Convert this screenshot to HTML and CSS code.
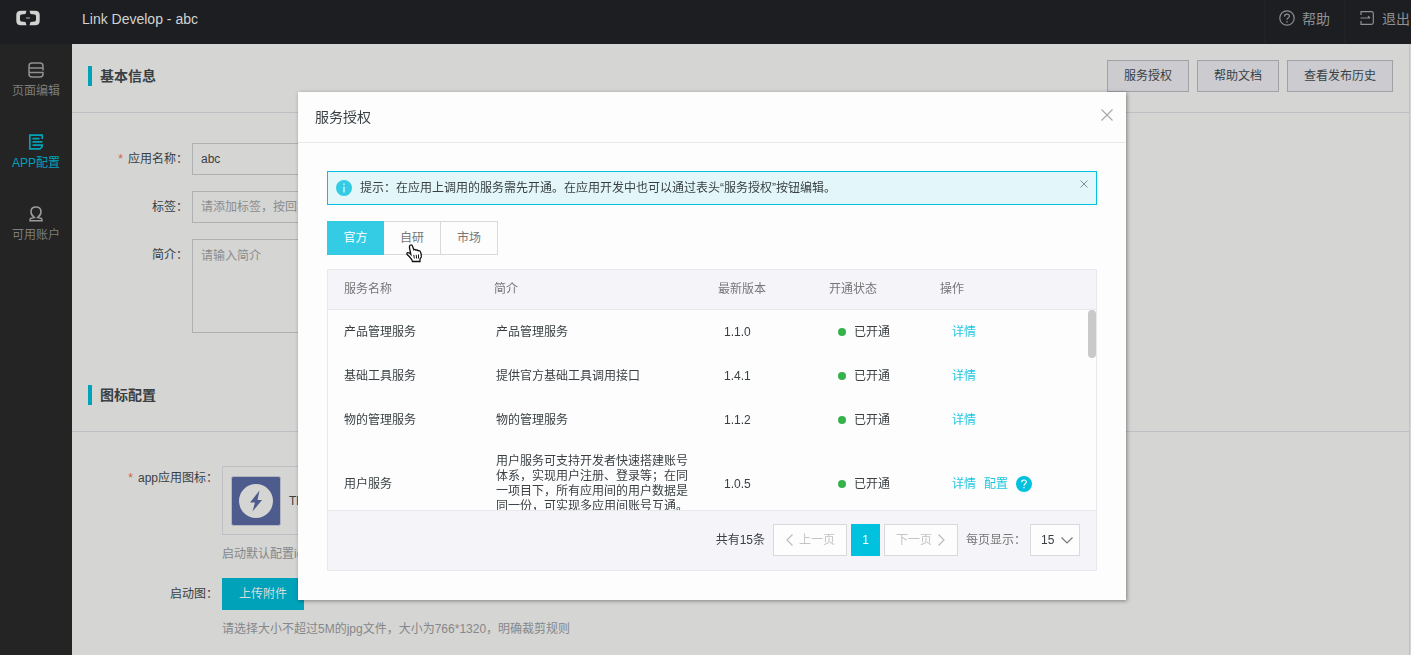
FILE: index.html
```html
<!DOCTYPE html>
<html lang="zh-CN">
<head>
    <meta charset="UTF-8">
    <meta name="viewport" content="width=device-width, initial-scale=1.0">
    <title>Link Develop - abc</title>
    <link rel="stylesheet" href="styles.css">
</head>
<body>

    <!-- Top bar -->
    <header class="topbar">
        <a href="#" class="logo" aria-label="Link Develop">
            <svg width="24" height="16" viewBox="0 0 24 16">
                <path d="M10.500 0.800H5Q0.300 0.800 0.300 5V11Q0.300 15.200 5 15.200H10.500L9.500 12L5.500 11.600Q4 11.400 4 10V6Q4 4.600 5.500 4.400L9.500 4Z" fill="#d2d3d1"/>
                <path d="M13.500 0.800H19Q23.700 0.800 23.700 5V11Q23.700 15.200 19 15.200H13.500L14.500 12L18.500 11.600Q20 11.400 20 10V6Q20 4.600 18.500 4.400L14.500 4Z" fill="#d2d3d1"/>
                <path d="M10 8H14" stroke="#b4b5b4"/>
            </svg>
        </a>
        <span class="app-name">Link Develop - abc</span>
        <nav class="top-links">
            <a href="#">
                <svg width="16" height="16" viewBox="0 0 16 16" fill="none" stroke="#8f9090" stroke-width="1.200">
                    <circle cx="8" cy="8" r="7.200"/>
                    <path d="M5.600 6.400Q5.600 4.200 8 4.200Q10.400 4.200 10.400 6.100Q10.400 7.200 9.200 7.900Q8 8.600 8 9.800M8 11V12.400"/>
                </svg>
                帮助
            </a>
            <a href="#">
                <svg width="14" height="16" viewBox="0 0 14 16" fill="none" stroke="#8f9090" stroke-width="1.200">
                    <path d="M1 5V1.700H11.500Q13.300 1.700 13.300 3.500V12.500Q13.300 14.300 11.500 14.300H1V11M0.500 8H10M8 6.200L10 8"/>
                </svg>
                退出
            </a>
        </nav>
    </header>

    <div class="layout">
        <!-- Side menu -->
        <nav class="sidebar">
            <a href="#">
                <svg width="16" height="16" viewBox="0 0 16 16" fill="none" stroke="#8f908f" stroke-width="1.500">
                    <path d="M15 5.500V4Q15 1 12 1H4Q1 1 1 4V12Q1 15 4 15H12Q15 15 15 12V10.500H1M1 6H15.500M15 5V8.500"/>
                </svg>
                页面编辑
            </a>
            <a href="#" class="active">
                <svg width="16" height="16" viewBox="0 0 16 16" fill="none" stroke="#00a2ba" stroke-width="1.700">
                    <path d="M14.200 5V1.200H1.800V14.800H12L14.200 12.500V11.200H4.500M4.500 4.700H11.500M4.500 7.900H14.500"/>
                </svg>
                APP配置
            </a>
            <a href="#">
                <svg width="16" height="16" viewBox="0 0 16 16" fill="none" stroke="#9a9b9a" stroke-width="1.600">
                    <path d="M6.200 11.500Q3 9 3 5.800Q3 1 8 1Q13 1 13 5.800Q13 9 9.800 11.500L13 12.300Q14.200 12.800 14 14.800H2Q1.800 12.800 3 12.300Z"/>
                </svg>
                可用账户
            </a>
        </nav>

        <!-- Main content -->
        <main class="content">
            <section>
                <div class="section-head">
                    <h2>基本信息</h2>
                    <div class="head-buttons">
                        <button type="button">服务授权</button>
                        <button type="button">帮助文档</button>
                        <button type="button">查看发布历史</button>
                    </div>
                </div>
                <form class="form">
                    <div class="form-row">
                        <label for="appName"><span class="required">*</span>应用名称：</label>
                        <input type="text" id="appName" value="abc">
                    </div>
                    <div class="form-row">
                        <label for="tags">标签：</label>
                        <input type="text" id="tags" placeholder="请添加标签，按回车确认">
                    </div>
                    <div class="form-row">
                        <label for="intro">简介：</label>
                        <textarea id="intro" placeholder="请输入简介"></textarea>
                    </div>
                </form>
            </section>

            <section>
                <div class="section-head">
                    <h2>图标配置</h2>
                </div>
                <div class="form form-wide">
                    <div class="form-row">
                        <span class="label"><span class="required">*</span>app应用图标：</span>
                        <div>
                            <div class="icon-box">
                                <svg width="50" height="50" viewBox="0 0 50 50">
                                    <rect x="0.500" y="0.500" width="49" height="49" rx="2" fill="#4e5c8d" stroke="#b5b7c0"/>
                                    <circle cx="25" cy="25" r="17" fill="#d5d5d3"/>
                                    <path d="M28.500 14.500L19 26.500H24L21.500 35.500L31 24H26.500Z" fill="#4e5c8d"/>
                                </svg>
                                <span>This icon</span>
                            </div>
                            <p class="hint">启动默认配置icon</p>
                        </div>
                    </div>
                    <div class="form-row">
                        <span class="label">启动图：</span>
                        <div>
                            <button type="button" class="upload-btn">上传附件</button>
                            <p class="hint">请选择大小不超过5M的jpg文件，大小为766*1320，明确裁剪规则</p>
                        </div>
                    </div>
                </div>
            </section>
        </main>
    </div>

    <!-- Service dialog -->
    <div class="overlay">
        <div class="modal" role="dialog" aria-labelledby="modalTitle">
            <div class="modal-head">
                <h3 id="modalTitle">服务授权</h3>
                <button type="button" class="close" aria-label="关闭">
                    <svg width="12" height="12" viewBox="0 0 12 12" stroke="#aaaaaa" stroke-width="1.200"><path d="M0.500 0.500L11.500 11.500M11.500 0.500L0.500 11.500"/></svg>
                </button>
            </div>
            <div class="modal-body">
                <div class="tip">
                    <svg width="16" height="16" viewBox="0 0 16 16">
                        <circle cx="8" cy="8" r="8" fill="#33cce4"/>
                        <path d="M8 3.500V5M8 6.500V12.500" stroke="#e3f7fb" stroke-width="1.300"/>
                    </svg>
                    <p>提示：在应用上调用的服务需先开通。在应用开发中也可以通过表头“服务授权”按钮编辑。</p>
                    <button type="button" class="close" aria-label="关闭提示">
                        <svg width="8" height="8" viewBox="0 0 8 8" stroke="#7d9094"><path d="M0.500 0.500L7.500 7.500M7.500 0.500L0.500 7.500"/></svg>
                    </button>
                </div>

                <div class="tabs">
                    <button type="button" class="active">官方</button>
                    <button type="button">自研
                        <svg class="pointer" width="17" height="19" viewBox="0 0 17 19">
                            <path d="M3.500 2Q4 0.800 5 0.800Q6.200 0.800 6.600 2.200L7.800 5.800Q9 5 10 6.200Q11.400 5.600 12.200 6.800Q13.800 6.300 14.400 7.800Q15.800 10.500 15.300 13L14 15V17.500H6.500Q5.800 15.200 3.500 12.800L1 10.300Q0.500 8.900 1.800 8.600Q3.200 8.500 4.800 10.300L3.500 4Z" fill="#ffffff" stroke="#111111" stroke-width="1.300"/>
                            <path d="M7.800 10.800L8.300 14.500M10.200 10.800L10.600 14.500M12.500 10.500V14.500" stroke="#111111"/>
                        </svg>
                    </button>
                    <button type="button">市场</button>
                </div>

                <div class="service-list">
                    <table class="list-head">
                        <thead>
                            <tr>
                                <th class="col-name">服务名称</th>
                                <th class="col-intro">简介</th>
                                <th class="col-version">最新版本</th>
                                <th class="col-status">开通状态</th>
                                <th>操作</th>
                            </tr>
                        </thead>
                    </table>
                    <div class="list-scroll">
                        <table class="list-body">
                            <tbody>
                                <tr>
                                    <td class="col-name">产品管理服务</td>
                                    <td class="col-intro">产品管理服务</td>
                                    <td class="col-version">1.1.0</td>
                                    <td class="col-status"><span class="status">已开通</span></td>
                                    <td><div class="actions"><a href="#">详情</a></div></td>
                                </tr>
                                <tr>
                                    <td>基础工具服务</td>
                                    <td>提供官方基础工具调用接口</td>
                                    <td>1.4.1</td>
                                    <td><span class="status">已开通</span></td>
                                    <td><div class="actions"><a href="#">详情</a></div></td>
                                </tr>
                                <tr>
                                    <td>物的管理服务</td>
                                    <td>物的管理服务</td>
                                    <td>1.1.2</td>
                                    <td><span class="status">已开通</span></td>
                                    <td><div class="actions"><a href="#">详情</a></div></td>
                                </tr>
                                <tr>
                                    <td>用户服务</td>
                                    <td>用户服务可支持开发者快速搭建账号体系，实现用户注册、登录等；在同一项目下，所有应用间的用户数据是同一份，可实现多应用间账号互通。</td>
                                    <td>1.0.5</td>
                                    <td><span class="status">已开通</span></td>
                                    <td>
                                        <div class="actions">
                                            <a href="#">详情</a>
                                            <a href="#">配置</a>
                                            <svg width="16" height="16" viewBox="0 0 16 16">
                                                <circle cx="8" cy="8" r="8" fill="#00c1de"/>
                                                <path d="M5.700 6.200Q5.700 4 8 4Q10.300 4 10.300 6Q10.300 7 9.200 7.800Q8 8.600 8 9.800M8 11V12.300" fill="none" stroke="#ffffff" stroke-width="1.200"/>
                                            </svg>
                                        </div>
                                    </td>
                                </tr>
                            </tbody>
                        </table>
                        <div class="scroll-thumb"></div>
                    </div>
                    <div class="pager">
                        <span class="total">共有15条</span>
                        <button type="button" class="step" disabled>
                            <svg width="8" height="12" viewBox="0 0 8 12" fill="none" stroke="#bbbbbb" stroke-width="1.200"><path d="M7.500 0.500L2 6L7.500 11.500"/></svg>
                            上一页
                        </button>
                        <button type="button" class="current">1</button>
                        <button type="button" class="step" disabled>
                            下一页
                            <svg width="8" height="12" viewBox="0 0 8 12" fill="none" stroke="#bbbbbb" stroke-width="1.200"><path d="M0.500 0.500L6 6L0.500 11.500"/></svg>
                        </button>
                        <label for="pageSize">每页显示：</label>
                        <div class="page-size">
                            <select id="pageSize">
                                <option>15</option>
                                <option>30</option>
                                <option>50</option>
                            </select>
                            <svg width="12" height="7" viewBox="0 0 12 7" fill="none" stroke="#777777" stroke-width="1.200"><path d="M0.500 0.500L6 6L11.500 0.500"/></svg>
                        </div>
                    </div>
                </div>
            </div>
        </div>
    </div>

</body>
</html>
```
FILE: styles.css
```css
* {
    box-sizing: border-box;
}

body {
    margin: 0;
    height: 100vh;
    display: flex;
    flex-direction: column;
    overflow: hidden;
    font-family: "Liberation Sans", "Noto Sans CJK SC", sans-serif;
    font-size: 12px;
    line-height: 18px;
    color: #393f43;
    background: #d5d5d3;
}

h2, h3, p {
    margin: 0;
}

a {
    text-decoration: none;
}

svg {
    display: block;
    flex: none;
}

button, input, textarea, select {
    font: inherit;
    color: inherit;
    border-radius: 0;
}

button {
    padding: 0;
    cursor: pointer;
}

/* Top bar */
.topbar {
    display: flex;
    flex: none;
    height: 44px;
    background: #1d1e22;
    color: #d2d3d1;
    font-size: 14px;
    line-height: 38px;
    white-space: nowrap;
}

.logo {
    width: 82px;
    padding: 10px 16px;
}

.app-name {
    flex: 1;
}

.top-links {
    display: flex;
}

.top-links a {
    display: flex;
    gap: 7px;
    width: 80px;
    padding-left: 14px;
    border-left: 1px solid #222327;
    color: #8f9090;
}

.top-links a:last-child {
    width: 67px;
    padding-left: 15px;
    gap: 8px;
}

.top-links svg {
    margin-top: 10px;
}

.layout {
    display: flex;
    flex: 1;
    min-height: 0;
}

/* Side menu */
.sidebar {
    flex: none;
    width: 72px;
    background: #232423;
}

.sidebar a {
    display: flex;
    flex-direction: column;
    align-items: center;
    gap: 4px;
    height: 72px;
    padding-top: 18px;
    color: #7c7d7c;
}

.sidebar a.active {
    color: #00a2ba;
}

/* Content */
.content {
    flex: 1;
    min-width: 0;
    margin-right: 1px;
    border-right: 1px solid #c2c2c4;
}

.section-head {
    display: flex;
    align-items: center;
    justify-content: space-between;
    height: 69px;
    padding: 0 16px 4px;
    border-bottom: 1px solid #bfbfc5;
}

.section-head h2 {
    padding-left: 8px;
    border-left: 4px solid #00a2ba;
    font-size: 14px;
    line-height: 20px;
    font-weight: bold;
}

.head-buttons {
    display: flex;
    gap: 8px;
}

.head-buttons button {
    height: 32px;
    padding: 0 16px;
    background: #cbcbd0;
    border: 1px solid #9fa1a4;
}

.form {
    display: flex;
    flex-direction: column;
    gap: 16px;
    padding: 30px 16px 30px 0;
}

.form-row {
    display: flex;
}

.form-row label,
.form-row .label {
    flex: none;
    width: 120px;
    padding-right: 4px;
    line-height: 32px;
    text-align: right;
}

.required {
    margin-right: 5px;
    color: #d4614a;
}

.form input,
.form textarea {
    display: block;
    width: 400px;
    height: 32px;
    padding: 0 8px;
    background: transparent;
    border: 1px solid #afb0b1;
}

.form textarea {
    height: 94px;
    padding: 7px 8px;
    resize: none;
}

.form ::placeholder {
    color: #8b8c8e;
    opacity: 1;
}

.form-wide {
    gap: 15px;
    padding-top: 34px;
}

.form-wide .form-row .label {
    width: 150px;
    line-height: 24px;
}

.form-wide .form-row:last-child .label {
    line-height: 32px;
}

.icon-box {
    display: flex;
    align-items: center;
    gap: 8px;
    width: 240px;
    height: 69px;
    padding: 0 8px;
    border: 1px solid #bfbfc5;
}

.hint {
    margin-top: 10px;
    color: #85878a;
}

.upload-btn {
    display: block;
    width: 82px;
    height: 32px;
    background: #00a2ba;
    border: 0;
    color: #d9dcdc;
}

/* Dialog */
.overlay {
    position: fixed;
    top: 0;
    right: 0;
    bottom: 0;
    left: 0;
    display: flex;
    justify-content: center;
    align-items: flex-start;
    padding: 92px 0 0 13px;
}

.modal {
    width: 828px;
    background: #fdfdfd;
    box-shadow: 1px 1px 4px rgba(0, 0, 0, 0.4);
}

.modal-head {
    display: flex;
    justify-content: space-between;
    align-items: center;
    height: 51px;
    padding: 0 13px 0 17px;
    border-bottom: 1px solid #e9e9e9;
}

.modal-head h3 {
    font-size: 14px;
    font-weight: normal;
}

.close {
    background: none;
    border: 0;
}

.modal-head .close {
    margin-bottom: 4px;
}

.modal-body {
    padding: 28px 29px 29px;
}

.tip {
    display: flex;
    align-items: center;
    height: 34px;
    padding: 0 8px;
    background: #e3f7fb;
    border: 1px solid #00c1de;
}

.tip p {
    flex: 1;
    margin-left: 8px;
}

.tip .close {
    margin-bottom: 8px;
}

.tabs {
    display: flex;
    margin: 16px 0 14px;
}

.tabs button {
    position: relative;
    width: 57px;
    height: 34px;
    background: #fdfdfd;
    border: 1px solid #d9d9d9;
    border-left: 0;
    color: #777777;
}

.tabs .active {
    background: #33cce4;
    border: 1px solid #33cce4;
    color: #ffffff;
}

.pointer {
    position: absolute;
    top: 22px;
    left: 22px;
}

.service-list {
    border: 1px solid #e9e9ed;
    background: #f4f4f9;
}

.service-list table {
    width: 100%;
    table-layout: fixed;
    border-collapse: collapse;
    text-align: left;
}

.list-head th {
    height: 39px;
    padding: 0 0 2px 16px;
    color: #777777;
    font-weight: normal;
}

.list-head .col-name {
    width: 150px;
}

.list-head .col-intro {
    width: 224px;
}

.list-head .col-version,
.list-head .col-status {
    width: 111px;
}

.list-scroll {
    position: relative;
    height: 202px;
    overflow: hidden;
    background: #fdfdfd;
    border-top: 1px solid #e9e9ed;
    border-bottom: 1px solid #e9e9ed;
}

.list-body td {
    height: 44px;
    padding: 12px 16px;
    line-height: 15px;
}

.list-body .col-name {
    width: 152px;
}

.list-body .col-intro {
    width: 228px;
}

.list-body .col-version {
    width: 114px;
}

.list-body .col-status {
    width: 114px;
}

.status {
    display: flex;
    align-items: center;
    gap: 8px;
}

.status::before {
    content: "";
    width: 8px;
    height: 8px;
    border-radius: 50%;
    background: #35b34a;
}

.actions {
    display: flex;
    align-items: center;
    gap: 8px;
}

.actions a {
    color: #1fc6e0;
}

.scroll-thumb {
    position: absolute;
    top: 0;
    right: 0;
    width: 8px;
    height: 48px;
    border-radius: 4px;
    background: #c9c9c9;
}

.pager {
    display: flex;
    align-items: center;
    justify-content: flex-end;
    height: 59px;
    padding: 0 16px 2px 0;
}

.pager button,
.page-size select {
    height: 32px;
    background: #fdfdfd;
    border: 1px solid #d9d9d9;
}

.pager .total {
    margin-right: 8px;
}

.pager .step {
    display: flex;
    align-items: center;
    justify-content: center;
    gap: 6px;
    width: 74px;
    color: #c4c4c4;
}

.pager .current {
    width: 29px;
    margin: 0 4px;
    background: #00c1de;
    border-color: #00c1de;
    color: #ffffff;
}

.pager label {
    margin: 0 4px 0 8px;
    color: #777777;
}

.page-size {
    position: relative;
}

.page-size select {
    display: block;
    width: 50px;
    padding: 0 0 0 10px;
    appearance: none;
}

.page-size svg {
    position: absolute;
    top: 13px;
    right: 7px;
    pointer-events: none;
}
```
